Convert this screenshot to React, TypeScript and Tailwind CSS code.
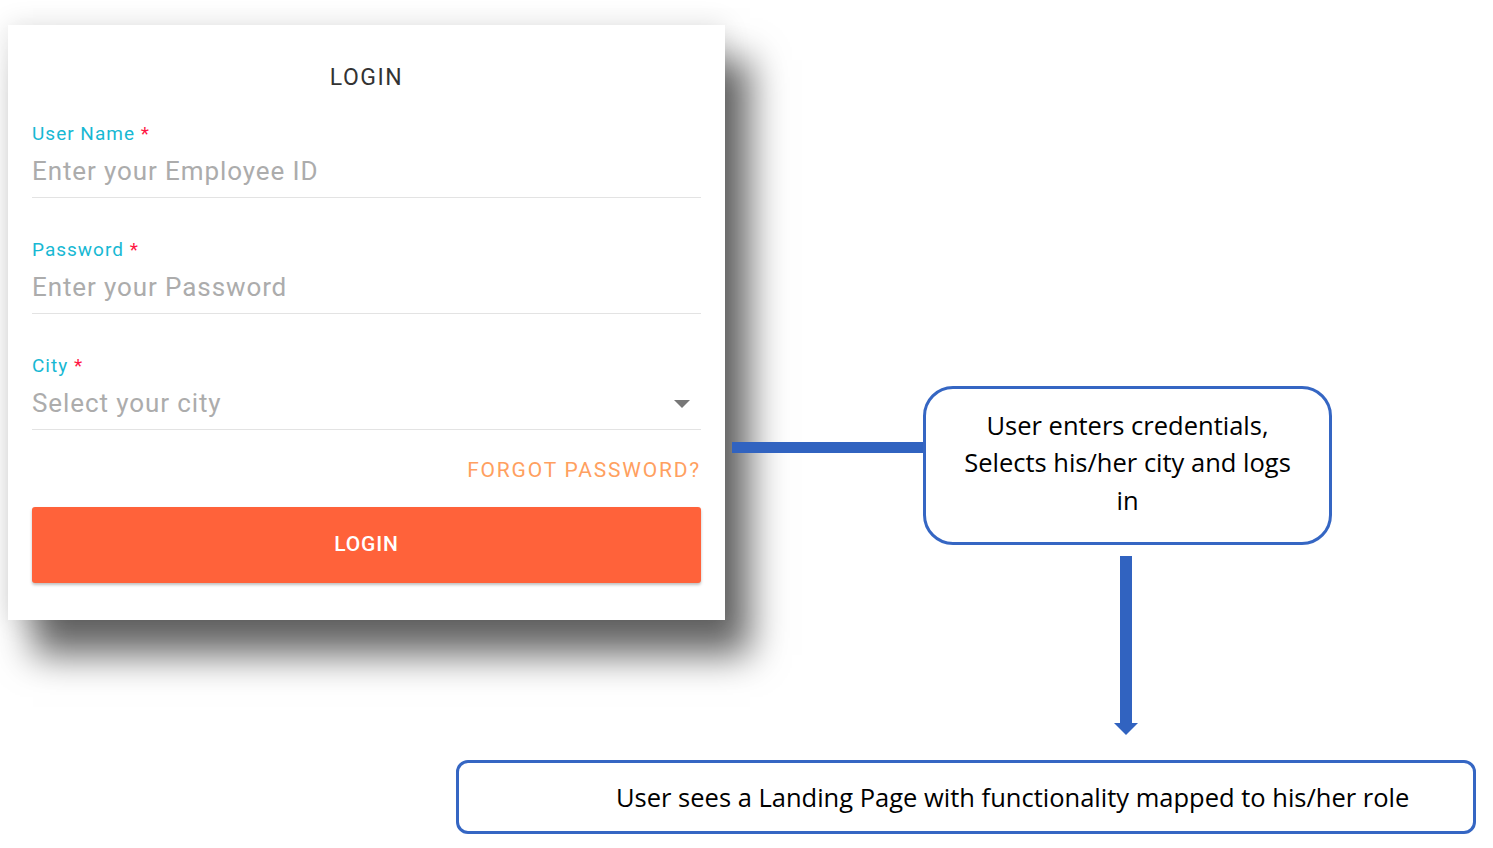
import React from 'react'

type FieldProps = { label: string; placeholder: string; select?: boolean }

function Field({ label, placeholder, select }: FieldProps) {
  return (
    <div className="flex flex-col">
      <div className="h-[20px] leading-[20px] text-[19px] tracking-[1px] text-[#17b8d3]">
        {label} <span className="text-[#ff1744]">*</span>
      </div>
      <div className="mt-[12px] flex items-center justify-between pb-[11px] border-b border-[#e3e3e3]">
        <span className="h-[30px] leading-[30px] text-[26px] tracking-[0.9px] text-[#acacac]">{placeholder}</span>
        {select && (
          <svg width="16" height="8" viewBox="0 0 16 8" className="mr-[11px] mt-[2px]">
            <polygon points="0,0 16,0 8,8" fill="#777" />
          </svg>
        )}
      </div>
    </div>
  )
}

export default function App() {
  return (
    <div className="relative w-[1493px] h-[848px] overflow-hidden bg-white">
      {/* login card */}
      <div
        className="ml-[8px] mt-[25px] w-[717px] h-[595px] bg-white px-[24px] flex flex-col shadow-[25px_35px_35px_rgba(0,0,0,0.6),0_0_25px_rgba(0,0,0,0.12)]"
        style={{ fontFamily: 'Roboto, "Liberation Sans", sans-serif' }}
      >
        <div className="pt-[39px] h-[66px] leading-[28px] text-center text-[23px] tracking-[1.5px] text-[#333]">LOGIN</div>
        <div className="mt-[33px] flex flex-col gap-[42px]">
          <Field label="User Name" placeholder="Enter your Employee ID" />
          <Field label="Password" placeholder="Enter your Password" />
          <Field label="City" placeholder="Select your city" select />
        </div>
        <div className="mt-[28px] h-[24px] leading-[24px] text-right text-[21px] tracking-[1.8px] text-[#ffa060]">
          FORGOT PASSWORD?
        </div>
        <button className="mt-[25px] h-[76px] w-full rounded-[3px] bg-[#ff623a] text-white text-[21px] font-medium tracking-[0.8px] shadow-[0_2px_3px_rgba(0,0,0,0.25)]">
          LOGIN
        </button>
      </div>

      {/* diagram */}
      <div style={{ fontFamily: '"Open Sans", "Liberation Sans", sans-serif' }}>
        <div className="absolute left-[732px] top-[442px] w-[192px] h-[11px] bg-[#3163c0]" />
        <div className="absolute left-[923px] top-[386px] w-[409px] h-[159px] rounded-[30px] border-[3px] border-[#3566c3] bg-white flex items-center justify-center pb-[5px] text-center text-[25.5px] leading-[37.5px] text-black">
          <p>
            User enters credentials,
            <br />
            Selects his/her city and logs
            <br />
            in
          </p>
        </div>
        <svg className="absolute left-[1114px] top-[556px]" width="24" height="179" viewBox="0 0 24 179">
          <rect x="6" y="0" width="12" height="168" fill="#3163c0" />
          <polygon points="0,167 24,167 12,179" fill="#3163c0" />
        </svg>
        <div className="absolute left-[456px] top-[760px] w-[1020px] h-[74px] rounded-[12px] border-[3px] border-[#3566c3] bg-white flex items-center pl-[157px] text-[25.5px] text-black">
          User sees a Landing Page with functionality mapped to his/her role
        </div>
      </div>
    </div>
  )
}
